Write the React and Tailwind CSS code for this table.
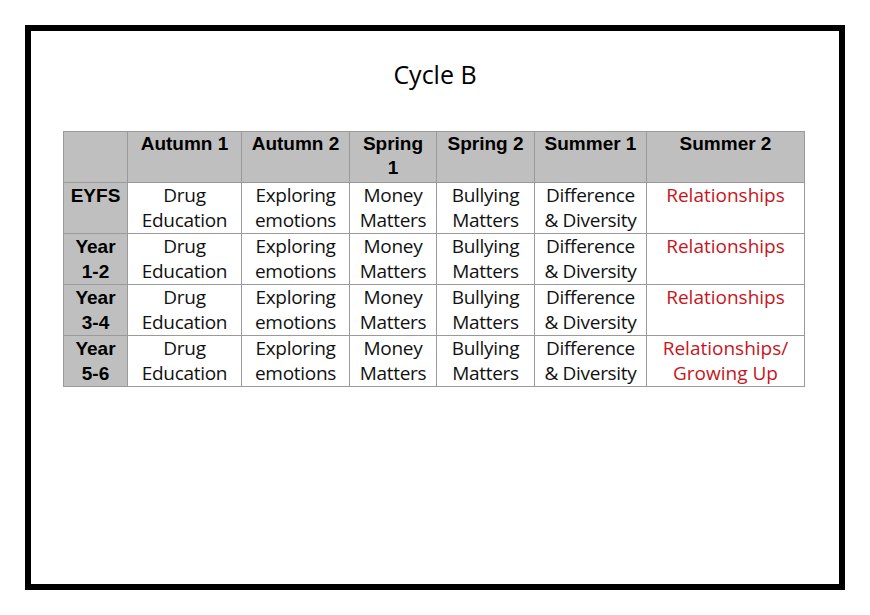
const columns = [
  { label: [""], width: "w-[64px]" },
  { label: ["Autumn 1"], width: "w-[114px]" },
  { label: ["Autumn 2"], width: "w-[108px]" },
  { label: ["Spring", "1"], width: "w-[87px]" },
  { label: ["Spring 2"], width: "w-[98px]" },
  { label: ["Summer 1"], width: "w-[112px]" },
  { label: ["Summer 2"], width: "w-[158px]" },
];

const topics = [
  ["Drug", "Education"],
  ["Exploring", "emotions"],
  ["Money", "Matters"],
  ["Bullying", "Matters"],
  ["Difference", "& Diversity"],
];

const rows = [
  { label: ["EYFS"], last: ["Relationships"] },
  { label: ["Year", "1-2"], last: ["Relationships"] },
  { label: ["Year", "3-4"], last: ["Relationships"] },
  { label: ["Year", "5-6"], last: ["Relationships/", "Growing Up"] },
];

function Lines({ lines }) {
  return lines.map((line, i) => (
    <span key={i} className="block">
      {line}
    </span>
  ));
}

export default function App() {
  return (
    <div className="h-[615px] w-[870px] bg-white pl-[25px] pt-[25px]">
      <div className="h-[565px] w-[820px] border-[6px] border-black pl-[32px] pt-[24px]">
        <h1 className="mr-[32px] text-center text-[25px] leading-[38px] text-black [font-family:'Open_Sans',sans-serif]">
          Cycle B
        </h1>
        <table className="mt-[38px] table-fixed border-collapse text-[19px] leading-[25px] text-[#111] [font-family:'Open_Sans',sans-serif]">
          <thead>
            <tr className="h-[51px]">
              {columns.map((col, i) => (
                <th
                  key={i}
                  className={`${col.width} border border-[#9a9a9a] bg-[#bfbfbf] px-0 pt-0 align-top text-[19px] font-bold leading-[24px] text-black [font-family:'Liberation_Sans',sans-serif]`}
                >
                  <Lines lines={col.label} />
                </th>
              ))}
            </tr>
          </thead>
          <tbody>
            {rows.map((row, r) => (
              <tr key={r} className="h-[51px]">
                <th className="border border-[#9a9a9a] bg-[#bfbfbf] px-1 pt-0 align-top text-[19px] font-bold leading-[25px] text-black [font-family:'Liberation_Sans',sans-serif]">
                  <Lines lines={row.label} />
                </th>
                {topics.map((topic, c) => (
                  <td
                    key={c}
                    className="whitespace-nowrap border border-[#9a9a9a] px-0 pt-0 text-center align-top tracking-[-0.3px]"
                  >
                    <Lines lines={topic} />
                  </td>
                ))}
                <td className="border border-[#9a9a9a] px-1 pt-0 text-center align-top text-[#c8141c]">
                  <Lines lines={row.last} />
                </td>
              </tr>
            ))}
          </tbody>
        </table>
      </div>
    </div>
  );
}
